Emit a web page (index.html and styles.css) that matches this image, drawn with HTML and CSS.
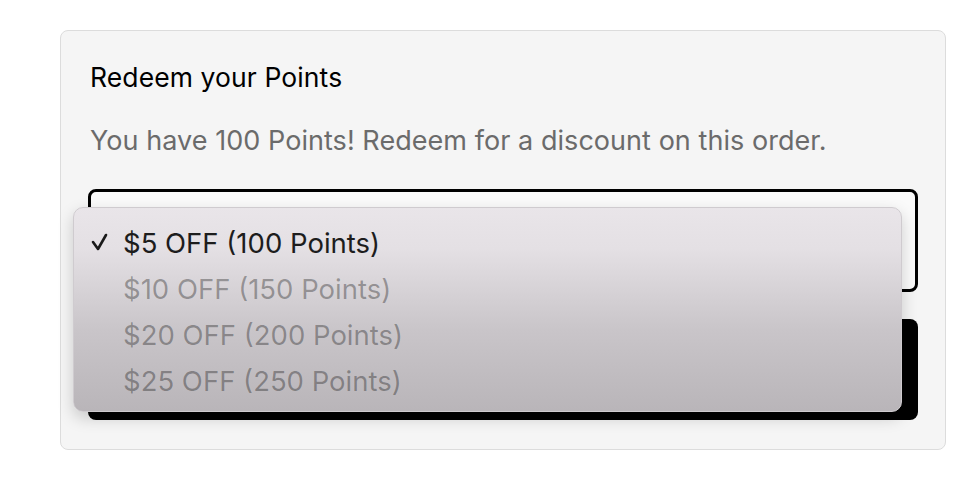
FILE: index.html
```html
<!DOCTYPE html>
<html lang="en">
  <head>
    <meta charset="UTF-8" />
    <title>Redeem your Points</title>
    <link rel="stylesheet" href="styles.css">
  </head>
  <body>
    <!-- Points redemption card -->
    <div class="card">
      <h2 class="card-title">Redeem your Points</h2>
      <p class="card-text">You have 100 Points! Redeem for a discount on this order.</p>

      <div class="select-wrap">
        <div class="select-box"></div>
        <ul class="menu">
          <li class="menu-item selected">
            <svg class="check" width="18" height="20" viewBox="0 0 18 20">
              <polyline points="2,9 7,16 15,2" fill="none" stroke="#1a1a1a" stroke-width="2.6" stroke-linecap="round" stroke-linejoin="round" />
            </svg>
            $5 OFF (100 Points)
          </li>
          <li class="menu-item">$10 OFF (150 Points)</li>
          <li class="menu-item">$20 OFF (200 Points)</li>
          <li class="menu-item">$25 OFF (250 Points)</li>
        </ul>
      </div>

      <button class="redeem-btn"></button>
    </div>
  </body>
</html>
```

FILE: styles.css
```css
body {
  margin: 0;
  background: #fff;
  font-family: Inter, "Liberation Sans", sans-serif;
}
.card {
  margin: 30px 0 0 60px;
  width: 830px;
  padding: 28px 27px 29px;
  background: #f5f5f5;
  border: 1px solid #dcdcdc;
  border-radius: 8px;
}
.card-title {
  margin: 0;
  font-size: 26.5px;
  font-weight: 400;
  line-height: 36px;
  color: #000;
  padding-left: 2px;
  letter-spacing: 0.1px;
}
.card-text {
  margin: 28px 0 0;
  font-size: 27px;
  line-height: 36px;
  color: #6b6b6b;
  padding-left: 2px;
  letter-spacing: 0.05px;
}
.select-wrap {
  position: relative;
  margin-top: 30px;
}
.select-box {
  height: 97px;
  border: 3px solid #000;
  border-radius: 8px;
  background: #fafafa;
}
.menu {
  position: absolute;
  left: -15px;
  top: 18px;
  width: 829px;
  height: 205px;
  box-sizing: border-box;
  margin: 0;
  padding: 12px 0 0;
  list-style: none;
  border: 1px solid #cfcbcf;
  border-radius: 10px;
  background: linear-gradient(to bottom, #e9e5e9 0%, #e4e0e4 20%, #c9c5c9 60%, #b9b5b9 100%);
  box-shadow: 0 6px 16px rgba(0, 0, 0, 0.18);
}
.menu-item {
  position: relative;
  height: 46px;
  line-height: 46px;
  padding-left: 49px;
  font-size: 27.5px;
  color: rgba(0, 0, 0, 0.32);
}
.menu-item.selected {
  color: #1d1d1d;
}
.check {
  position: absolute;
  left: 17px;
  top: 13px;
}
.redeem-btn {
  display: block;
  width: 100%;
  height: 101px;
  margin-top: 27px;
  border: none;
  border-radius: 8px;
  background: #000;
}
```
